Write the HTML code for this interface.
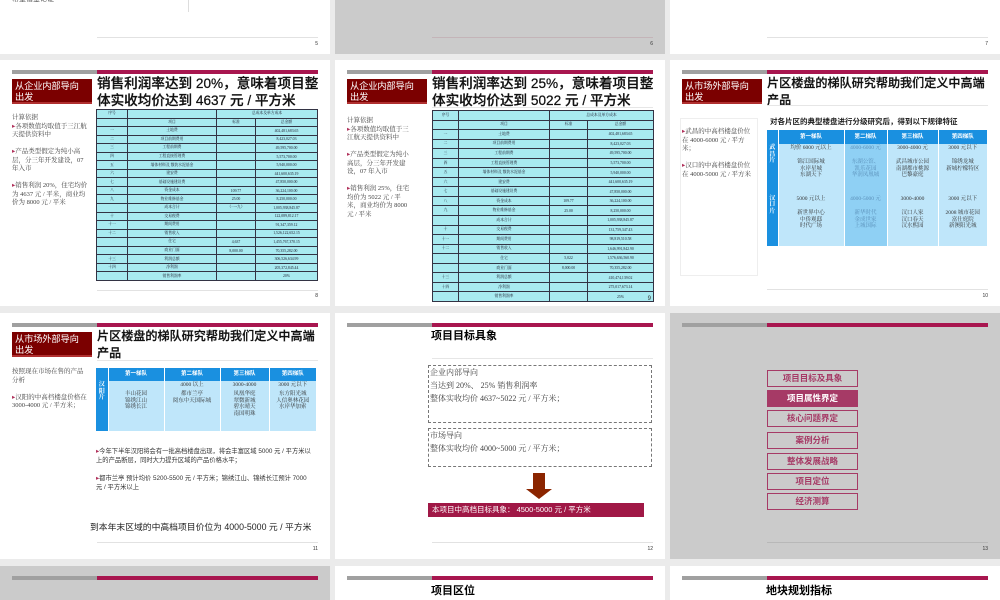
<!DOCTYPE html>
<html style="width:1000px;height:600px;overflow:hidden"><head><meta charset="utf-8">
<style>
*{margin:0;padding:0;box-sizing:border-box}
body{width:1000px;height:600px;background:#ebebeb;position:relative;overflow:hidden;font-family:"Liberation Sans","Noto Sans CJK SC",sans-serif;color:#000}
.s{position:absolute;width:330px;height:246px;background:#fff;overflow:hidden}
.g{background:#cbcbcb}
.bar1{position:absolute;left:12px;top:10px;width:85px;height:4px;background:#a0a0a0}
.bar2{position:absolute;left:97px;top:10px;width:221px;height:4px;background:#a8164f}
.fl{position:absolute;left:97px;top:229px;width:221px;height:1px;background:#e2e2e2}
.pn{position:absolute;right:12px;top:233px;font-size:5px;color:#333}
.rb{position:absolute;left:12px;top:19px;width:80px;height:25px;background:#7b0000;color:#fff;font-size:9.3px;line-height:11px;padding:2px 0 0 3px;border-bottom:2px solid #b03030;letter-spacing:-0.2px}
.t{position:absolute;left:97px;top:15px;font-size:13.6px;line-height:17px;font-weight:500;width:226px;color:#111;-webkit-text-stroke:0.25px #111}
.t2{font-size:12.1px;letter-spacing:0;line-height:17px;width:224px}
.ul{position:absolute;left:97px;top:47px;width:221px;height:1px;background:#e6e6e6}
.lt{position:absolute;left:12px;font-family:"Liberation Serif","Noto Serif CJK SC",serif;font-size:6.5px;line-height:8.5px;color:#444;width:76px}
.lt b{color:#b0305a;font-weight:normal}
table{border-collapse:collapse;position:absolute;font-size:3.8px;font-family:"Liberation Serif","Noto Serif CJK SC",serif}
.ct td{background:#a8eaf0;border:0.7px solid #334;text-align:center;padding:0;color:#223}
.bt td{text-align:center;color:#333;font-family:"Liberation Serif","Noto Serif CJK SC",serif;font-size:5.5px;line-height:6.5px;background:#bfe6fa;border-right:1px solid #fff;vertical-align:top;padding:1px 0}
.bt tr.h td{background:#1a90e0;color:#fff;font-weight:bold;font-family:"Liberation Sans","Noto Sans CJK SC",sans-serif;font-size:5.5px;vertical-align:middle}
.bt td.sd{background:#1a90e0;color:#fff;font-size:6px;line-height:6.5px;font-weight:bold}
.bt td.dk{background:#8fd0f4;color:#5a8fb8}
.btn{position:absolute;left:97px;width:91px;height:17px;border:1.5px solid #a63a66;color:#a63a66;font-size:8.5px;font-weight:bold;text-align:center;line-height:14px}
.btn.on{background:#a63a66;color:#fff}
.r4{height:34px}
</style></head><body>

<!-- row 1 -->
<div class="s" style="left:0;top:-192px">
<div style="position:absolute;left:12px;top:186px;font-size:7px;color:#555">希望借鉴论证</div>
<div style="position:absolute;left:188px;top:180px;width:1px;height:24px;background:#ddd"></div>
<div class="fl"></div><div class="pn">5</div></div>
<div class="s g" style="left:335px;top:-192px"><div class="fl" style="background:#c4b4b8"></div><div class="pn">6</div></div>
<div class="s" style="left:670px;top:-192px"><div class="fl"></div><div class="pn">7</div></div>

<!-- slide 8 -->
<div class="s" style="left:0;top:60px">
<div class="bar1"></div><div class="bar2"></div>
<div class="rb">从企业内部导向<br>出发</div>
<div class="t">销售利润率达到 20%，意味着项目整体实收均价达到 4637 元 / 平方米</div>
<div class="lt" style="top:54px">计算依据<br><b>▸</b>各项数值均取值于三江航天提供资料中<br><br><b>▸</b>产品类型假定为纯小高层，分三年开发建设，07 年入市<br><br><b>▸</b>销售利润 20%，住宅均价为 4637 元 / 平米，商业均价为 8000 元 / 平米</div>
<table class="ct" style="left:96px;top:49px;width:222px;height:172px">
<tr><td style="width:31px">序号</td><td style="width:89px"></td><td colspan="2">总成本及单方成本</td></tr>
<tr><td></td><td>项目</td><td style="width:39px">标准</td><td>总金额</td></tr>
<tr><td>一</td><td>土地费</td><td></td><td>402,481,683.65</td></tr>
<tr><td>二</td><td>项目前期费用</td><td></td><td>8,423,027.03</td></tr>
<tr><td>三</td><td>工程前期费</td><td></td><td>49,595,700.00</td></tr>
<tr><td>四</td><td>工程直接管理费</td><td></td><td>5,573,700.00</td></tr>
<tr><td>五</td><td>墙体材料及 散装水泥基金</td><td></td><td>5,940,000.00</td></tr>
<tr><td>六</td><td>建安费</td><td></td><td>441,600,635.19</td></tr>
<tr><td>七</td><td>基础设施建设费</td><td></td><td>47,850,000.00</td></tr>
<tr><td>八</td><td>资金成本</td><td>109.77</td><td>36,224,100.00</td></tr>
<tr><td>九</td><td>物业维修基金</td><td>25.00</td><td>8,250,000.00</td></tr>
<tr><td></td><td>成本合计</td><td>（一~九）</td><td>1,005,938,845.87</td></tr>
<tr><td>十</td><td>交易税费</td><td></td><td>122,089,812.17</td></tr>
<tr><td>十一</td><td>期间费用</td><td></td><td>91,347,359.12</td></tr>
<tr><td>十二</td><td>销售收入</td><td></td><td>1,526,122,652.15</td></tr>
<tr><td></td><td>住宅</td><td>4,637</td><td>1,455,767,370.15</td></tr>
<tr><td></td><td>商业门面</td><td>8,000.00</td><td>70,355,282.00</td></tr>
<tr><td>十三</td><td>利润总额</td><td></td><td>306,526,634.99</td></tr>
<tr><td>十四</td><td>净利润</td><td></td><td>205,372,845.44</td></tr>
<tr><td></td><td>销售利润率</td><td></td><td>20%</td></tr>
</table>
<div class="fl" style="top:230px"></div><div class="pn">8</div></div>

<!-- slide 9 -->
<div class="s" style="left:335px;top:60px">
<div class="bar1"></div><div class="bar2"></div>
<div class="rb">从企业内部导向<br>出发</div>
<div class="t">销售利润率达到 25%，意味着项目整体实收均价达到 5022 元 / 平方米</div>
<div class="ul"></div>
<div class="lt" style="top:57px;width:66px">计算依据<br><b>▸</b>各项数值均取值于三江航天提供资料中<br><br><b>▸</b>产品类型假定为纯小高层，分三年开发建设，07 年入市<br><br><b>▸</b>销售利润 25%，住宅均价为 5022 元 / 平米，商业均价为 8000 元 / 平米</div>
<table class="ct" style="left:97px;top:50px;width:222px;height:192px">
<tr><td style="width:26px">序号</td><td style="width:91px"></td><td colspan="2">总成本及单方成本</td></tr>
<tr><td></td><td>项目</td><td style="width:38px">标准</td><td>总金额</td></tr>
<tr><td>一</td><td>土地费</td><td></td><td>402,481,683.65</td></tr>
<tr><td>二</td><td>项目前期费用</td><td></td><td>8,423,027.03</td></tr>
<tr><td>三</td><td>工程前期费</td><td></td><td>49,595,700.00</td></tr>
<tr><td>四</td><td>工程直接管理费</td><td></td><td>5,573,700.00</td></tr>
<tr><td>五</td><td>墙体材料及 散装水泥基金</td><td></td><td>5,940,000.00</td></tr>
<tr><td>六</td><td>建安费</td><td></td><td>441,600,635.19</td></tr>
<tr><td>七</td><td>基础设施建设费</td><td></td><td>47,850,000.00</td></tr>
<tr><td>八</td><td>资金成本</td><td>109.77</td><td>36,224,100.00</td></tr>
<tr><td>九</td><td>物业维修基金</td><td>25.00</td><td>8,250,000.00</td></tr>
<tr><td></td><td>成本合计</td><td></td><td>1,005,938,845.87</td></tr>
<tr><td>十</td><td>交易税费</td><td></td><td>131,759,347.43</td></tr>
<tr><td>十一</td><td>期间费用</td><td></td><td>98,819,510.58</td></tr>
<tr><td>十二</td><td>销售收入</td><td></td><td>1,646,991,842.90</td></tr>
<tr><td></td><td>住宅</td><td>5,022</td><td>1,576,636,560.90</td></tr>
<tr><td></td><td>商业门面</td><td>8,000.00</td><td>70,355,282.00</td></tr>
<tr><td>十三</td><td>利润总额</td><td></td><td>410,474,139.02</td></tr>
<tr><td>十四</td><td>净利润</td><td></td><td>275,017,673.14</td></tr>
<tr><td></td><td>销售利润率</td><td></td><td>25%</td></tr>
</table>
<div class="pn" style="top:236px;font-size:6px;right:14px">9</div></div>

<!-- slide 10 -->
<div class="s" style="left:670px;top:60px">
<div class="bar1"></div><div class="bar2"></div>
<div class="rb">从市场外部导向<br>出发</div>
<div class="t t2">片区楼盘的梯队研究帮助我们定义中高端<br>产品</div>
<div class="ul" style="top:45px"></div>
<div style="position:absolute;left:10px;top:58px;width:78px;height:158px;border:1px solid #eee"></div>
<div class="lt" style="top:68px;width:70px"><b>▸</b>武昌的中高档楼盘价位在 4000-6000 元 / 平方米；<br><br><b>▸</b>汉口的中高档楼盘价位在 4000-5000 元 / 平方米</div>
<div style="position:absolute;left:100px;top:56px;font-size:7.5px;font-weight:bold;color:#222">对各片区的典型楼盘进行分级研究后，得到以下规律特征</div>
<table class="bt" style="left:97px;top:70px;width:221px;height:116px">
<tr class="h" style="height:14px"><td style="width:11px"></td><td style="width:66px">第一梯队</td><td style="width:43px">第二梯队</td><td style="width:51px">第三梯队</td><td>第四梯队</td></tr>
<tr><td class="sd" rowspan="2">武<br>昌<br>片</td><td>均价 6000 元以上</td><td class="dk">4000-6000 元</td><td>3000-4000 元</td><td>3000 元以下</td></tr>
<tr><td>锦江国际城<br>水岸星城<br>东湖天下</td><td class="dk">东湖公馆、<br>凯乐花园<br>华润凤凰城</td><td>武昌城市公园<br>南湖都市桃源<br>巴黎豪庭</td><td>锦绣龙城<br>新城柠檬特区</td></tr>
<tr><td class="sd" rowspan="2">汉<br>口<br>片</td><td>5000 元以上</td><td class="dk">4000-5000 元</td><td>3000-4000</td><td>3000 元以下</td></tr>
<tr><td>新世界中心<br>中侨观邸<br>时代广场</td><td class="dk">新华时代<br>金成世家<br>上城国际</td><td>汉口人家<br>汉口春天<br>汉水熙园</td><td>2008 城市花园<br>富仕庭院<br>新澳阳光城</td></tr>
</table>
<div class="fl"></div><div class="pn">10</div></div>

<!-- slide 11 -->
<div class="s" style="left:0;top:313px">
<div class="bar1"></div><div class="bar2"></div>
<div class="rb">从市场外部导向<br>出发</div>
<div class="t t2">片区楼盘的梯队研究帮助我们定义中高端<br>产品</div>
<div class="ul"></div>
<div class="lt" style="top:55px;width:76px">按照现在市场在售的产品分析<br><br><b>▸</b>汉阳的中高档楼盘价格在 3000-4000 元 / 平方米；</div>
<table class="bt" style="left:96px;top:55px;width:221px;height:63px">
<tr class="h" style="height:13px"><td style="width:12px"></td><td style="width:56px">第一梯队</td><td style="width:56px">第二梯队</td><td style="width:49px">第三梯队</td><td>第四梯队</td></tr>
<tr style="height:9px"><td class="sd" rowspan="2">汉<br>阳<br>片</td><td></td><td>4000 以上</td><td>3000-4000</td><td>3000 元以下</td></tr>
<tr><td>丰山花园<br>锦绣江山<br>锦绣长江</td><td>都市兰亭<br>阅东中天国际城</td><td>凤凰华庭<br>翠微新城<br>碧水晴天<br>南国明珠</td><td>东方阳光城<br>人信奥林花园<br>水岸华加索</td></tr>
</table>
<div style="position:absolute;left:96px;top:134px;font-size:6.3px;line-height:9px;color:#333;width:215px"><span style="color:#b0305a">▸</span>今年下半年汉阳将会有一批高档楼盘出现，将会丰富区域 5000 元 / 平方米以上的产品断层，同时大力提升区域的产品价格水平；<br><br><span style="color:#b0305a">▸</span>都市兰亭 预计均价 5200-5500 元 / 平方米；锦绣江山、锦绣长江预计 7000 元 / 平方米以上</div>
<div style="position:absolute;left:90px;top:207px;font-size:8.8px;color:#222">到本年末区域的中高档项目价位为 4000-5000 元 / 平方米</div>
<div class="fl"></div><div class="pn">11</div></div>

<!-- slide 12 -->
<div class="s" style="left:335px;top:313px">
<div class="bar1"></div><div class="bar2"></div>
<div style="position:absolute;left:96px;top:14px;font-size:11px;font-weight:bold">项目目标具象</div>
<div class="ul" style="top:45px"></div>
<div style="position:absolute;left:93px;top:52px;width:224px;height:58px;border:1px dashed #777;font-family:'Liberation Serif','Noto Serif CJK SC',serif;font-size:8px;line-height:13px;color:#444;padding-left:1px">企业内部导向<br>当达到 20%、 25% 销售利润率<br>整体实收均价 4637~5022 元 / 平方米；</div>
<div style="position:absolute;left:93px;top:115px;width:224px;height:39px;border:1px dashed #777;font-family:'Liberation Serif','Noto Serif CJK SC',serif;font-size:8px;line-height:13px;color:#444;padding-left:1px">市场导向<br>整体实收均价 4000~5000 元 / 平方米；</div>
<svg style="position:absolute;left:190px;top:160px" width="28" height="26"><polygon points="8,0 20,0 20,16 27,16 14,26 1,16 8,16" fill="#8b2500"/></svg>
<div style="position:absolute;left:93px;top:190px;width:216px;height:14px;background:#a01846;color:#fff;font-size:7.5px;line-height:14px;padding-left:4px">本项目中高档目标具象： 4500-5000 元 / 平方米</div>
<div class="fl"></div><div class="pn">12</div></div>

<!-- slide 13 -->
<div class="s g" style="left:670px;top:313px">
<div class="bar1"></div><div class="bar2"></div>
<div class="btn" style="top:57px">项目目标及具象</div>
<div class="btn on" style="top:77px">项目属性界定</div>
<div class="btn" style="top:97px">核心问题界定</div>
<div class="btn" style="top:119px">案例分析</div>
<div class="btn" style="top:140px">整体发展战略</div>
<div class="btn" style="top:160px">项目定位</div>
<div class="btn" style="top:180px">经济测算</div>
<div class="fl" style="background:#b8b8b8"></div><div class="pn">13</div></div>

<!-- row 4 -->
<div class="s g r4" style="left:0;top:566px"><div class="bar1"></div><div class="bar2"></div></div>
<div class="s r4" style="left:335px;top:566px"><div class="bar1"></div><div class="bar2"></div>
<div style="position:absolute;left:96px;top:16px;font-size:11px;font-weight:bold">项目区位</div></div>
<div class="s r4" style="left:670px;top:566px"><div class="bar1"></div><div class="bar2"></div>
<div style="position:absolute;left:96px;top:16px;font-size:11px;font-weight:bold">地块规划指标</div></div>

</body></html>
